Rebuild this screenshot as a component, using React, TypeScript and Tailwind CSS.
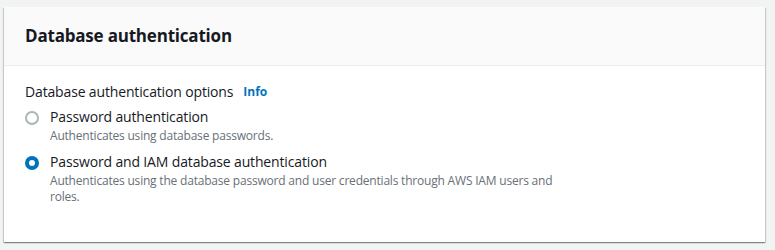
import React from "react";

function Radio({ checked }: { checked: boolean }) {
  return checked ? (
    <span className="mt-[5px] flex h-[14px] w-[14px] shrink-0 items-center justify-center rounded-full bg-[#0073bb]">
      <span className="h-[6px] w-[6px] rounded-full bg-white" />
    </span>
  ) : (
    <span className="mt-[5px] h-[14px] w-[14px] shrink-0 rounded-full border-2 border-[#aab7b8] bg-white" />
  );
}

export default function App() {
  return (
    <div
      className="min-h-[250px] w-[775px] bg-[#f2f3f3] pl-[4px] pt-[7px]"
      style={{ fontFamily: '"Open Sans", "Noto Sans", Arial, sans-serif' }}
    >
      <div className="flex h-[235px] w-[761px] flex-col bg-white shadow-[0_1px_1px_0_rgba(0,28,36,0.3),1px_1px_1px_0_rgba(0,28,36,0.15),-1px_1px_1px_0_rgba(0,28,36,0.15)]">
        <div className="flex h-[59px] items-center border-b border-[#eaeded] bg-[#fafafa] px-[21px]">
          <h2 className="text-[17px] font-bold leading-[22px] tracking-[-0.2px] text-[#16191f]">Database authentication</h2>
        </div>
        <div className="px-[21px] pt-[15px]">
          <div className="flex items-center text-[14px] leading-[22px] tracking-[-0.15px] text-[#16191f]">
            <span>Database authentication options</span>
            <span className="ml-[10px] text-[12px] font-bold tracking-normal text-[#0073bb]">Info</span>
          </div>
          <div className="mt-[3px] flex flex-col gap-[7px]">
            <div className="flex gap-[11px]">
              <Radio checked={false} />
              <div>
                <div className="text-[14px] leading-[22px] tracking-[-0.15px] text-[#16191f]">Password authentication</div>
                <div className="text-[12px] leading-[16px] tracking-[-0.2px] text-[#687078]">Authenticates using database passwords.</div>
              </div>
            </div>
            <div className="flex gap-[11px]">
              <Radio checked={true} />
              <div>
                <div className="text-[14px] leading-[22px] tracking-[-0.15px] text-[#16191f]">Password and IAM database authentication</div>
                <div className="w-[510px] text-[12px] leading-[16px] tracking-[-0.2px] text-[#687078]">
                  Authenticates using the database password and user credentials through AWS IAM users and roles.
                </div>
              </div>
            </div>
          </div>
        </div>
      </div>
    </div>
  );
}
